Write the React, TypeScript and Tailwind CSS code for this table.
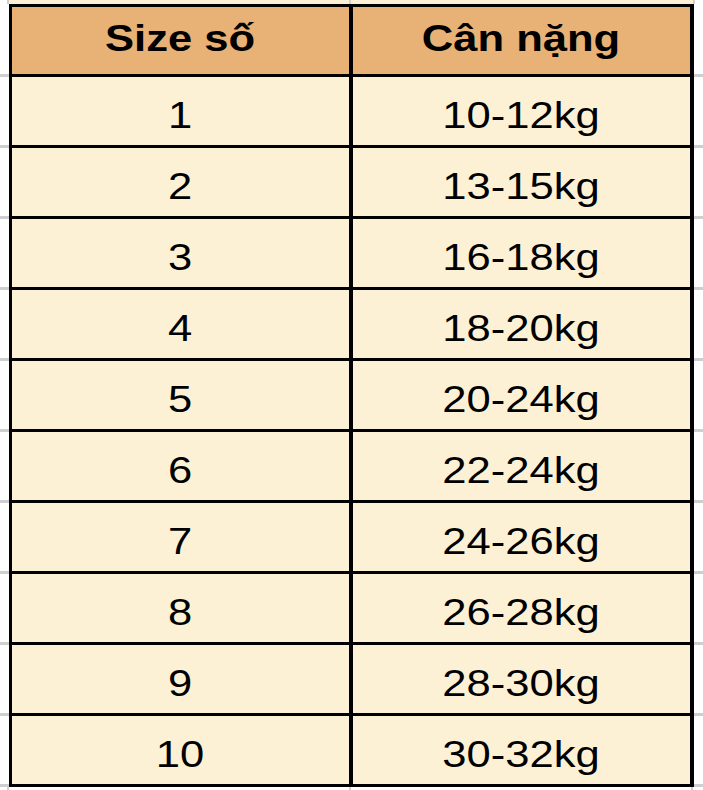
import React from 'react'

const rows = [
    ['1', '10-12kg'],
    ['2', '13-15kg'],
    ['3', '16-18kg'],
    ['4', '18-20kg'],
    ['5', '20-24kg'],
    ['6', '22-24kg'],
    ['7', '24-26kg'],
    ['8', '26-28kg'],
    ['9', '28-30kg'],
    ['10', '30-32kg'],
]

const Text: React.FC<{ children: React.ReactNode; bold?: boolean }> = ({ children, bold }) => (
    <span
        className={
            'inline-block scale-x-[1.21] text-[36px] leading-[40px] text-black whitespace-nowrap ' +
            (bold ? 'font-bold' : 'font-normal')
        }
    >
        {children}
    </span>
)

export default function App() {
    return (
        <div
            className="w-[703px] h-[790px] bg-white flex flex-col overflow-hidden"
            style={{ fontFamily: '"Liberation Sans", Arial, sans-serif' }}
        >
            {/* strip above the table */}
            <div className="flex h-[4px]">
                <div className="w-[9px] border-r-[2px] border-[#d0d0d0]" />
                <div className="w-[340px] bg-[#fcf1d5]" />
                <div className="w-[2px] bg-[#d0d0d0]" />
                <div className="w-[342px] bg-[#fcf1d5]" />
                <div className="flex-1 border-l-[2px] border-[#d0d0d0]" />
            </div>

            {/* top border */}
            <div className="flex h-[3px]">
                <div className="w-[9px]" />
                <div className="w-[685px] bg-black" />
                <div className="flex-1" />
            </div>

            {/* header */}
            <div className="flex h-[70px]">
                <div className="w-[9px] border-b-[3px] border-[#cfcfcf]" />
                <div className="flex w-[685px] bg-[#e8b176] border-l-[3px] border-r-[4px] border-b-[3px] border-black">
                    <div className="w-[341px] border-r-[4px] border-black flex items-center justify-center pb-[3px]">
                        <Text bold>Size số</Text>
                    </div>
                    <div className="flex-1 flex items-center justify-center pb-[3px]">
                        <Text bold>Cân nặng</Text>
                    </div>
                </div>
                <div className="flex-1 border-b-[3px] border-[#cfcfcf]" />
            </div>

            {rows.map(([size, weight]) => (
                <div key={size} className="flex h-[71px]">
                    <div className="w-[9px] border-b-[3px] border-[#cfcfcf]" />
                    <div className="flex w-[685px] bg-[#fcf1d5] border-l-[3px] border-r-[4px] border-b-[3px] border-black">
                        <div className="w-[341px] border-r-[4px] border-black flex items-center justify-center pt-[10px]">
                            <Text>{size}</Text>
                        </div>
                        <div className="flex-1 flex items-center justify-center pt-[10px]">
                            <Text>{weight}</Text>
                        </div>
                    </div>
                    <div className="flex-1 border-b-[3px] border-[#cfcfcf]" />
                </div>
            ))}

            <div className="flex flex-1">
                <div className="w-[9px] border-r-[2px] border-[#d0d0d0]" />
                <div className="w-[342px] border-r-[2px] border-[#d0d0d0]" />
                <div className="w-[342px] border-r-[2px] border-[#d0d0d0]" />
            </div>
        </div>
    )
}
